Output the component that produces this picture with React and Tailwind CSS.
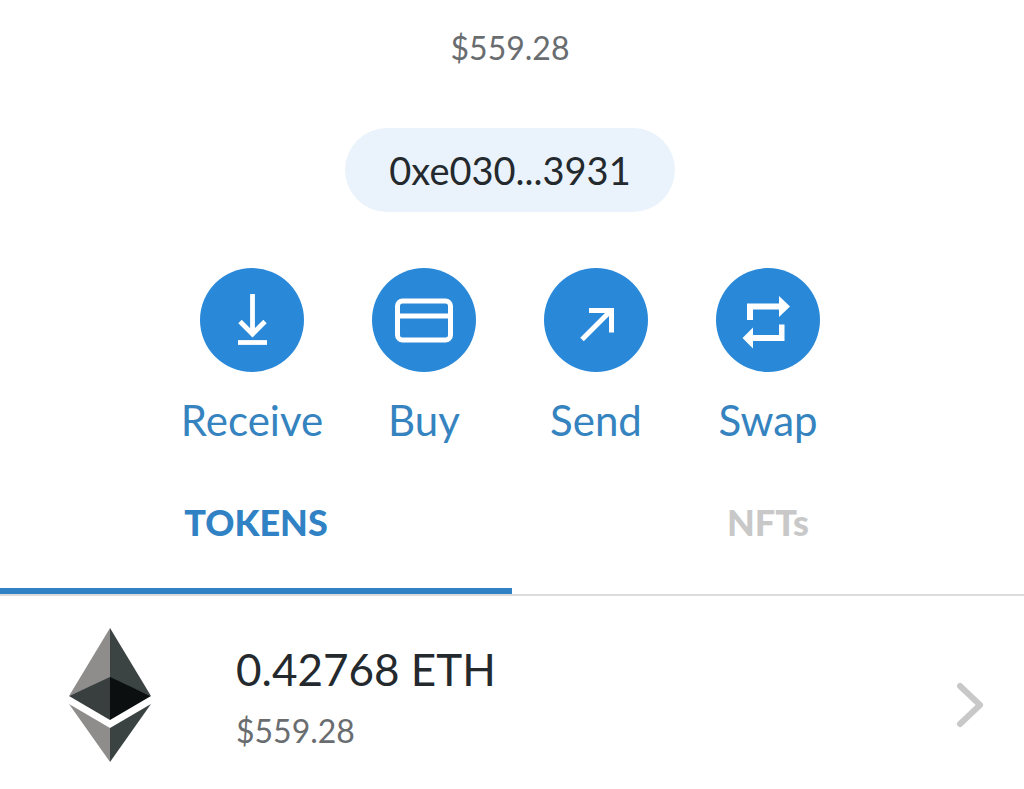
import { useState } from "react";

const actions = [
  {
    label: "Receive",
    icon: (
      <g fill="none" stroke="currentColor" strokeWidth="4.8">
        <path d="M52.5 26V65" />
        <path d="M40 53.500 52.500 66 65 53.500" />
        <path d="M38 74.500h29" />
      </g>
    ),
  },
  {
    label: "Buy",
    icon: (
      <g fill="none" stroke="currentColor" strokeWidth="5">
        <rect x="25.5" y="33" width="53" height="39" rx="5" />
        <path d="M25.5 48h53" />
      </g>
    ),
  },
  {
    label: "Send",
    icon: (
      <g fill="none" stroke="currentColor" strokeWidth="5">
        <path d="M38 71.500 66.500 43" />
        <path d="M45 42.500h22.500V64.500" />
      </g>
    ),
  },
  {
    label: "Swap",
    icon: (
      <path
        fill="currentColor"
        d="M31 52V35.500h32V28l11 10.500-11 10.500v-7.500H37V52zM68.500 56.500V73H37v7.500L26.500 70 37 59.500V67h26V56.500z"
      />
    ),
  },
];

const tabs = ["TOKENS", "NFTs"];

const tokens = [{ symbol: "ETH", balance: "0.42768", fiat: "$559.28" }];

function EthLogo() {
  return (
    <svg viewBox="0 0 84 134" className="h-[134px] w-[84px] shrink-0" aria-hidden="true">
      <path fill="#8f8d8c" d="M42 0v50L1 68z" />
      <path fill="#3c4443" d="M42 0v50l41 18z" />
      <path fill="#383f3e" d="M42 49v43L1 68z" />
      <path fill="#0b0f10" d="M42 49v43l41-24z" />
      <path fill="#8f8d8c" d="M1 76l41 24v34z" />
      <path fill="#3a4342" d="M83 76l-41 24v34z" />
    </svg>
  );
}

export default function App() {
  const [activeTab, setActiveTab] = useState("TOKENS");

  return (
    <div className="min-h-screen bg-white font-['Lato',sans-serif]">
      {/* Account */}
      <header className="flex flex-col items-center pt-7 pr-1">
        <p className="text-[32px] leading-10 text-[#6a6d70]">$559.28</p>
        <button className="mt-15 rounded-full bg-[#eaf3fb] px-11 py-5 text-[38px] leading-11 text-[#24292e]">
          0xe030...3931
        </button>

        {/* Actions */}
        <div className="mt-14 flex">
          {actions.map((action) => (
            <button
              key={action.label}
              className="flex w-43 flex-col items-center text-[42px] leading-12 text-[#3583bf]"
            >
              <span className="rounded-full bg-[#2a88d8] text-white">
                <svg viewBox="0 0 104 104" className="size-26" aria-hidden="true">
                  {action.icon}
                </svg>
              </span>
              <span className="mt-6">{action.label}</span>
            </button>
          ))}
        </div>
      </header>

      {/* Tabs */}
      <div role="tablist" className="mt-7 flex border-b-2 border-[#dcdcde]">
        {tabs.map((tab) => (
          <button
            key={tab}
            role="tab"
            aria-selected={activeTab === tab}
            onClick={() => setActiveTab(tab)}
            className={`flex-1 border-b-6 pt-7 pb-11 text-[36px] leading-11 font-black ${
              activeTab === tab
                ? "border-[#3182c4] text-[#3182c4]"
                : "border-transparent text-[#c8c8c8]"
            }`}
          >
            {tab}
          </button>
        ))}
      </div>

      {/* Token list */}
      <ul>
        {tokens.map((token) => (
          <li key={token.symbol}>
            <button className="flex w-full items-center py-8 pr-10 pl-17 text-left">
              <EthLogo />
              <span className="ml-21 flex-1">
                <span className="block text-[44px] leading-15 text-[#24292e]">
                  {token.balance} {token.symbol}
                </span>
                <span className="block pt-3 text-[32px] leading-10 text-[#6a6d70]">{token.fiat}</span>
              </span>
              <svg viewBox="0 0 28 46" className="mt-5 h-[46px] w-7 text-[#c8c8c8]" aria-hidden="true">
                <path
                  d="M4 4l20 19L4 42"
                  fill="none"
                  stroke="currentColor"
                  strokeWidth="6"
                  strokeLinecap="round"
                  strokeLinejoin="round"
                />
              </svg>
            </button>
          </li>
        ))}
      </ul>
    </div>
  );
}
